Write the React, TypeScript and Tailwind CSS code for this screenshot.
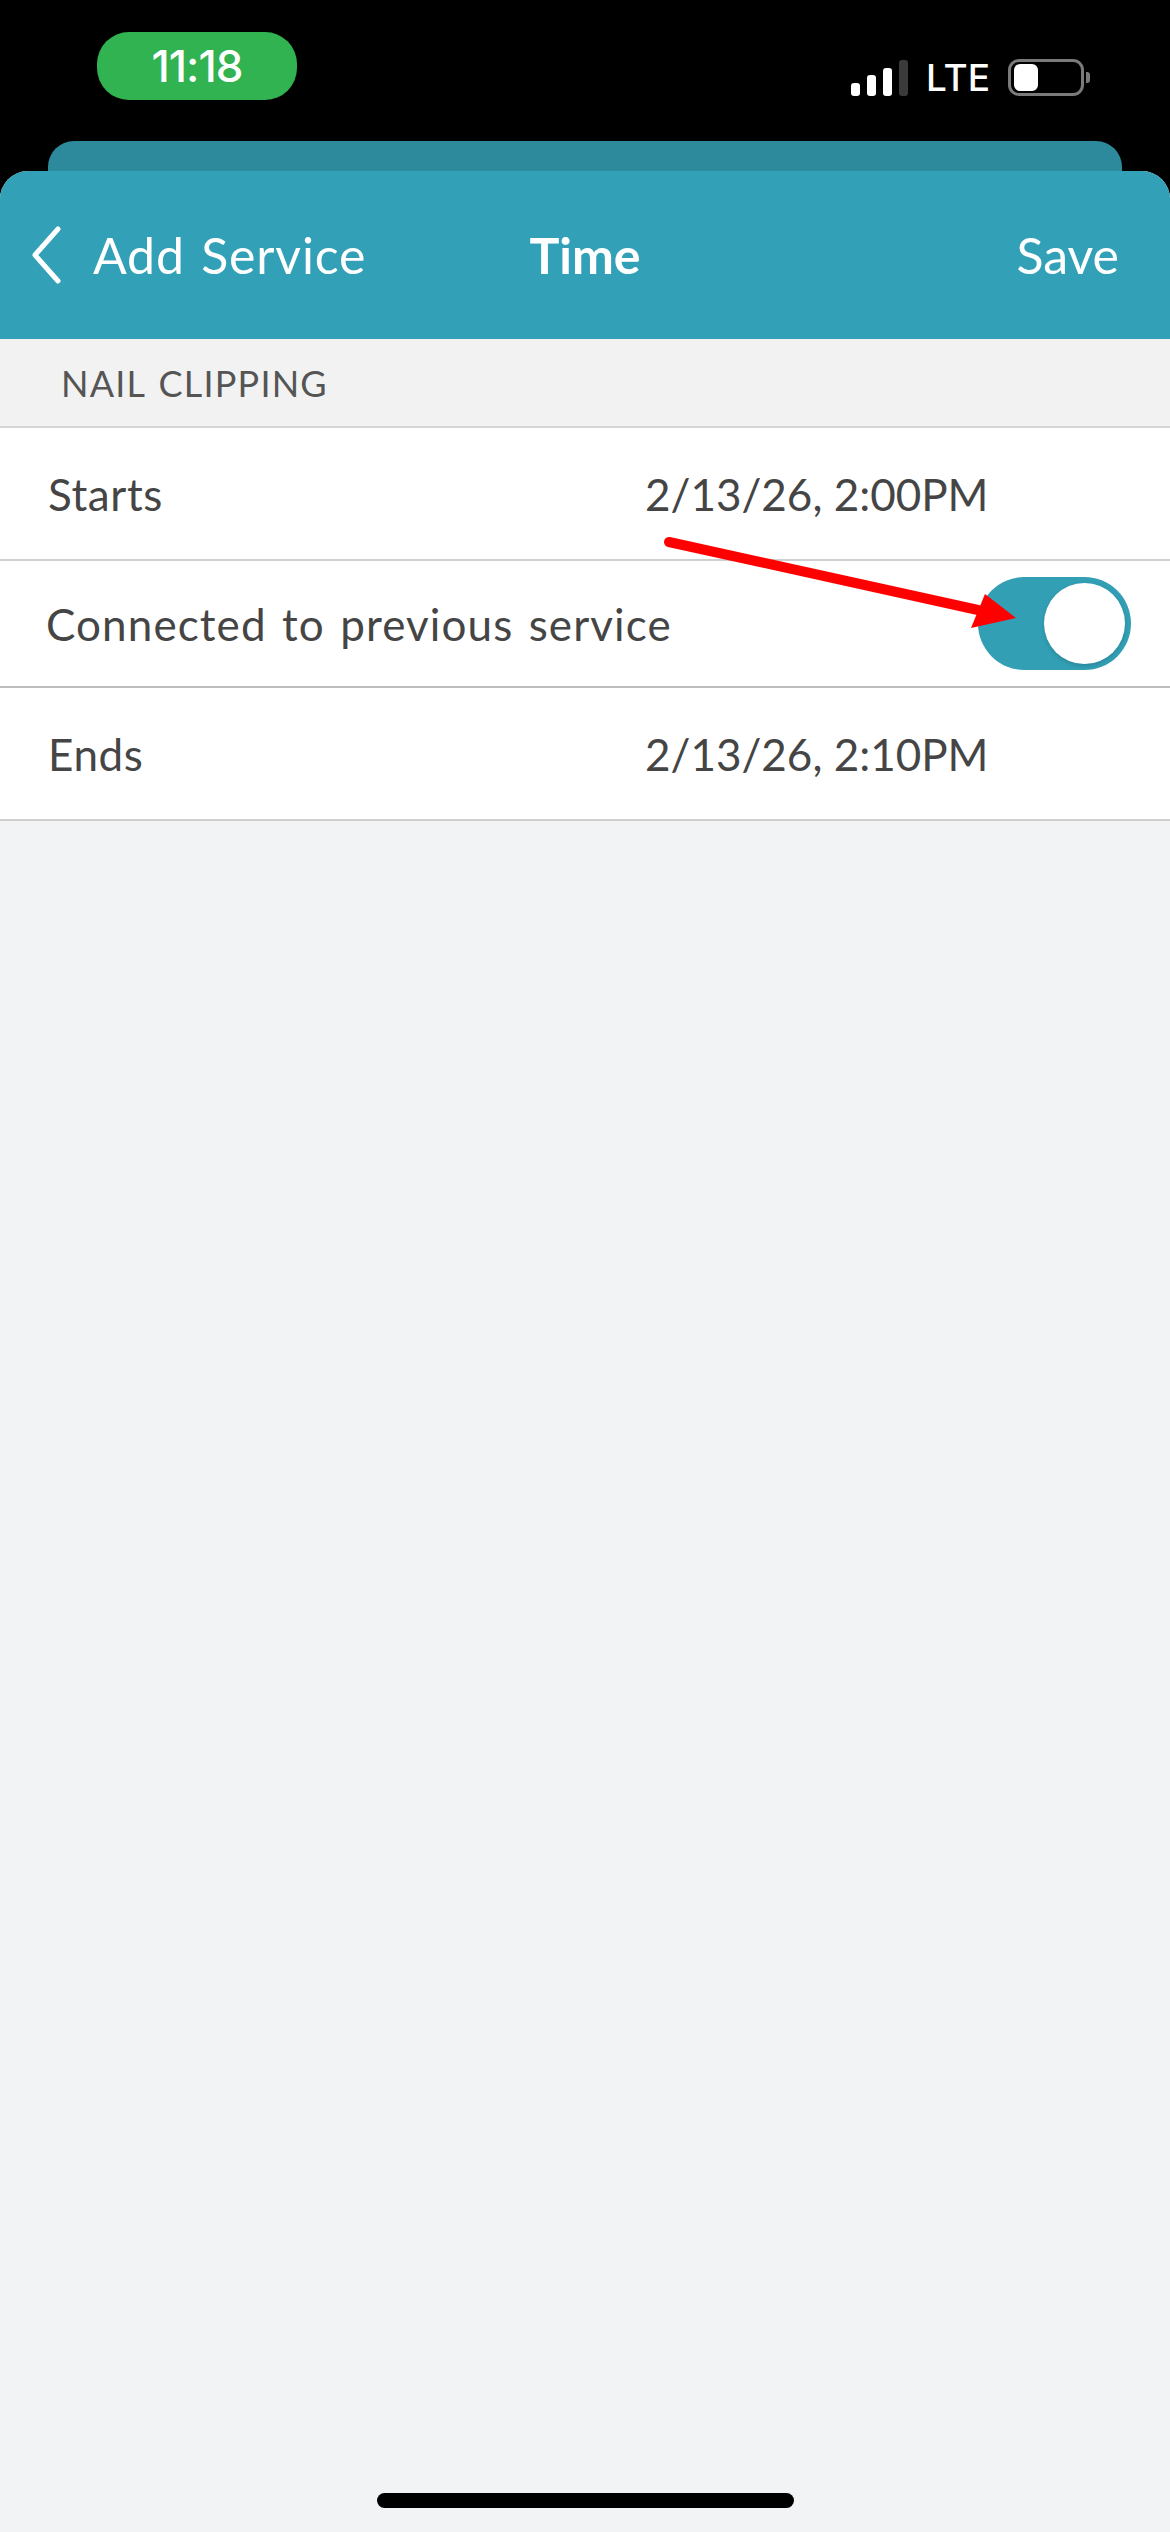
import React from 'react';

const appFont = { fontFamily: 'Lato, "Open Sans", sans-serif' };

function StatusBar() {
  return (
    <div className="flex h-[141px] items-start justify-between pl-[97px] pr-[80px] pt-[32px]" style={{ fontFamily: 'Inter, Roboto, sans-serif' }}>
      <div className="flex h-[68px] w-[200px] items-center justify-center rounded-[32px] bg-[#30b350] text-[44px] font-medium tracking-[-1px] text-white">
        11:18
      </div>
      <div className="mt-[27px] flex items-center">
        {/* signal */}
        <div className="flex h-[36px] items-end gap-[7px]">
          <div className="h-[13px] w-[9px] rounded-[3px] bg-white" />
          <div className="h-[21px] w-[9px] rounded-[3px] bg-white" />
          <div className="h-[28px] w-[9px] rounded-[3px] bg-white" />
          <div className="h-[36px] w-[9px] rounded-[3px] bg-[#3a3a3a]" />
        </div>
        <span className="ml-[18px] text-[37px] font-medium leading-none text-white">LTE</span>
        {/* battery */}
        <div className="ml-[18px] flex items-center">
          <div className="flex h-[37px] w-[76px] items-center rounded-[11px] border-[3px] border-[#7a7a7a] pl-[3px]">
            <div className="h-[27px] w-[24px] rounded-[6px] bg-white" />
          </div>
          <div className="ml-[2px] h-[11px] w-[4px] rounded-r-[3px] bg-[#7a7a7a]" />
        </div>
      </div>
    </div>
  );
}

function Toggle() {
  return (
    <div className="flex h-[93px] w-[153px] items-center justify-end rounded-full bg-[#329fb5] pr-[6px]">
      <div className="h-[81px] w-[81px] rounded-full bg-white shadow-[0_2px_4px_rgba(0,0,0,0.15)]" />
    </div>
  );
}

function Row({ label, value, h }: { label: string; value?: string; h: string }) {
  return (
    <div className={`flex ${h} items-center border-b-2 border-[#cfcfcf] bg-white pl-[48px]`}>
      <span className="w-[597px] text-[44px] tracking-[0.6px] text-[#454545]">{label}</span>
      {value && <span className="text-[44px] text-[#454545]">{value}</span>}
    </div>
  );
}

export default function App() {
  return (
    <div className="relative flex h-[2532px] w-[1170px] flex-col overflow-hidden bg-black" style={appFont}>
      <StatusBar />
      <div className="mx-[48px] h-[30px] rounded-t-[26px] bg-[#2d8a9d]" />
      <div className="flex flex-1 flex-col overflow-hidden rounded-t-[28px] bg-[#f2f3f5]">
        {/* nav header */}
        <div className="relative flex h-[168px] items-center bg-[#32a0b7] pl-[30px] pr-[51px] text-white">
          <svg width="32" height="58" viewBox="0 0 32 58" className="shrink-0">
            <polyline points="28,3 5,29 28,55" fill="none" stroke="white" strokeWidth="5" strokeLinecap="round" strokeLinejoin="round" />
          </svg>
          <span className="ml-[31px] text-[50px] tracking-[0.8px] [word-spacing:3px]">Add Service</span>
          <span className="absolute left-1/2 -translate-x-1/2 text-[50px] font-bold">Time</span>
          <span className="ml-auto text-[50px]">Save</span>
        </div>

        {/* section */}
        <div className="flex h-[89px] items-center border-b-2 border-[#d6d6d6] bg-[#f2f2f2] pl-[61px]">
          <span className="text-[36px] tracking-[1.2px] text-[#555555] [word-spacing:3px]">NAIL CLIPPING</span>
        </div>
        <Row label="Starts" value="2/13/26, 2:00PM" h="h-[133px]" />
        <div className="flex h-[127px] items-center border-b-2 border-[#bdbdbd] bg-white pl-[46px] pr-[39px]">
          <span className="text-[44px] tracking-[1.1px] text-[#454545] [word-spacing:3px]">Connected to previous service</span>
          <div className="ml-auto">
            <Toggle />
          </div>
        </div>
        <Row label="Ends" value="2/13/26, 2:10PM" h="h-[133px]" />

        <div className="mb-[24px] mt-auto h-[15px] w-[417px] self-center rounded-full bg-black" />
      </div>

      {/* annotation arrow */}
      <svg className="pointer-events-none absolute left-0 top-0" width="1170" height="800" viewBox="0 0 1170 800">
        <line x1="669" y1="542" x2="978" y2="610" stroke="#ff0000" strokeWidth="10" strokeLinecap="round" />
        <polygon points="1016,618 971,628 985,594" fill="#ff0000" />
      </svg>
    </div>
  );
}
